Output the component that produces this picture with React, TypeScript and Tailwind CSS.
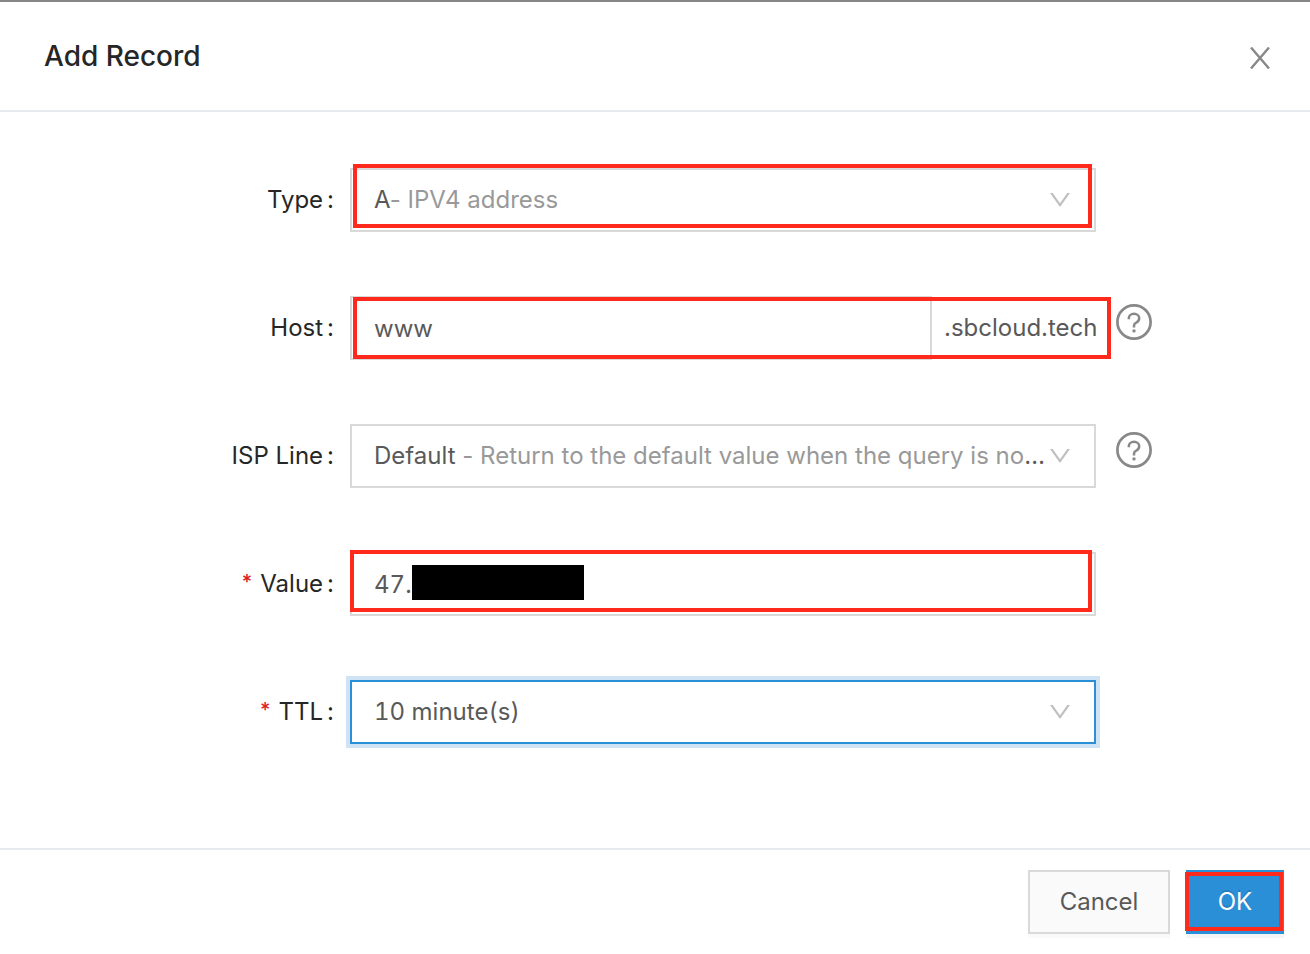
import type { ReactNode } from "react";

const control =
  "h-16 w-full min-w-0 appearance-none rounded-none border-2 border-[#d9d9d9] bg-white px-[22px] text-2xl text-[#595959] outline-none";

function Chevron() {
  return (
    <svg
      viewBox="0 0 20 14"
      className="pointer-events-none col-start-1 row-start-1 mr-[26px] h-[14px] w-5 self-center justify-self-end"
      aria-hidden="true"
    >
      <path d="M0 0H2.7L10 10.3 17.3 0H20L10 14Z" fill="#bfbfbf" />
    </svg>
  );
}

function Help({ label }: { label: string }) {
  return (
    <button type="button" aria-label={label} className="mt-2 ml-5 size-9 self-start">
      <svg viewBox="0 0 36 36" className="size-9" fill="none" stroke="#888888" aria-hidden="true">
        <circle cx="18" cy="18" r="16.6" strokeWidth="2.7" />
        <path
          d="M12.8 15.2V14.3C12.8 11.7 15 9.8 18 9.8S23.2 11.7 23.2 14.3C23.2 16.6 21.8 17.8 20.2 18.6C18.7 19.3 18 20.2 18 21.7V23.4"
          strokeWidth="2.5"
        />
        <circle cx="18" cy="26.9" r="1.7" fill="#888888" stroke="none" />
      </svg>
    </button>
  );
}

function Row({
  id,
  label,
  required,
  help,
  children,
}: {
  id: string;
  label: string;
  required?: boolean;
  help?: string;
  children: ReactNode;
}) {
  return (
    <div className="grid grid-cols-[350px_minmax(0,1fr)_214px] items-center">
      <label htmlFor={id} className="flex items-center justify-end pr-4 text-2xl text-[#262626]">
        {required && <span className="mr-2 pb-1 text-xl font-medium text-[#e02020]">*</span>}
        {label}
        <span className="ml-1">:</span>
      </label>
      {children}
      {help && <Help label={help} />}
    </div>
  );
}

function Highlight({ className }: { className: string }) {
  return (
    <span
      aria-hidden="true"
      className={`pointer-events-none absolute border-4 border-[#ff2a1c] ${className}`}
    />
  );
}

function RichSelect({ id, option, children }: { id: string; option: string; children: ReactNode }) {
  return (
    <div className="grid grid-cols-1">
      <div
        aria-hidden="true"
        className={`${control} col-start-1 row-start-1 flex items-center pr-12`}
      >
        <span className="truncate">{children}</span>
      </div>
      <Chevron />
      <select
        id={id}
        className="col-start-1 row-start-1 h-16 w-full min-w-0 cursor-pointer appearance-none px-[22px] text-2xl opacity-0"
      >
        <option>{option}</option>
      </select>
    </div>
  );
}

export default function App() {
  return (
    <main
      role="dialog"
      aria-labelledby="title"
      className="border-t-2 border-[#888686] bg-white font-['Inter','Liberation_Sans',sans-serif] [font-feature-settings:'calt'_0]"
    >
      <header className="flex h-[110px] items-center justify-between border-b-2 border-[#e6eaee] pr-10 pl-11">
        <h1 id="title" className="text-[28px] font-medium text-[#262626]">
          Add Record
        </h1>
        <button type="button" aria-label="Close" className="flex h-10 w-5 items-end justify-center pb-[7px]">
          <svg viewBox="0 0 20 22" className="h-[22px] w-5" aria-hidden="true">
            <path d="M1 0.5 19 21.5M19 0.5 1 21.5" fill="none" stroke="#888888" strokeWidth="2.4" />
          </svg>
        </button>
      </header>

      <form>
        <div className="flex flex-col gap-16 pt-14 pb-[104px]">
          <Row id="type" label="Type">
            <div className="relative">
              <RichSelect id="type" option="A- IPV4 address">
                A<span className="text-[#999999]">- IPV4 address</span>
              </RichSelect>
              <Highlight className="-top-1 right-1 bottom-1 left-[3px]" />
            </div>
          </Row>

          <Row id="host" label="Host" help="About the host">
            <div className="relative flex items-center">
              <div className="min-w-0 flex-1">
                <input id="host" type="text" defaultValue="www" className={control} />
              </div>
              <span className="w-[164px] pl-3 text-2xl whitespace-nowrap text-[#595959]">
                .sbcloud.tech
              </span>
              <Highlight className="top-px -right-[15px] bottom-px left-[3px]" />
            </div>
          </Row>

          <Row id="line" label="ISP Line" help="About the ISP line">
            <RichSelect
              id="line"
              option="Default - Return to the default value when the query is not matched"
            >
              Default{" "}
              <span className="text-[#999999]">
                - Return to the default value when the query is not matched
              </span>
            </RichSelect>
          </Row>

          <Row id="value" label="Value" required>
            <div className="relative">
              <input
                id="value"
                type="text"
                defaultValue="47."
                className={`${control} block tabular-nums`}
              />
              <span aria-hidden="true" className="absolute top-[13px] left-[62px] h-[35px] w-[172px] bg-black" />
              <Highlight className="-top-0.5 right-1 bottom-1 left-0" />
            </div>
          </Row>

          <Row id="ttl" label="TTL" required>
            <div className="grid grid-cols-1">
              <select
                id="ttl"
                className="col-start-1 row-start-1 h-16 w-full min-w-0 appearance-none rounded-none border-2 border-[#2a8fd7] bg-white px-[22px] text-2xl text-[#595959] tabular-nums ring-4 ring-[#cfe3f5] outline-none"
              >
                <option>10 minute(s)</option>
              </select>
              <Chevron />
            </div>
          </Row>
        </div>

        <footer className="flex justify-end gap-4 border-t-2 border-[#e6eaee] py-5 pr-[26px]">
          <button
            type="button"
            className="h-16 w-[142px] border-2 border-[#d9d9d9] bg-[#fafafa] text-2xl text-[#595959] shadow-[0_4px_0_#fafafa]"
          >
            Cancel
          </button>
          <button
            type="button"
            className="relative h-16 w-[98px] bg-[#2a8fd7] text-2xl text-white shadow-[0_4px_0_#f5f5f5] text-shadow-[0_-2px_0_rgb(0_0_0/0.12)]"
          >
            OK
            <Highlight className="top-0.5 right-px bottom-[3px] -left-px" />
          </button>
        </footer>
      </form>
    </main>
  );
}
